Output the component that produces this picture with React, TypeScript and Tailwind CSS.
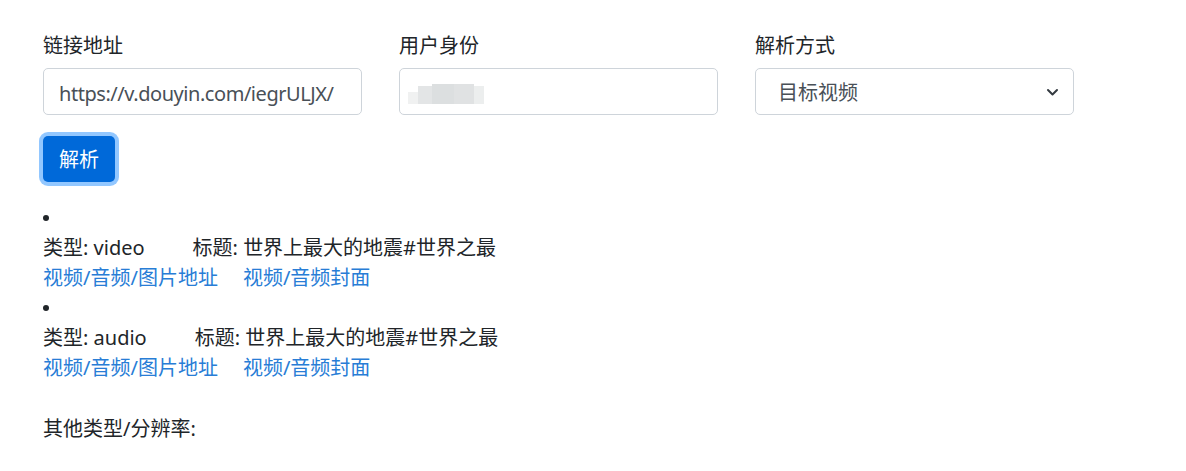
export default function App() {
  const font = {
    fontFamily: '"Segoe UI", "Noto Sans", "Noto Sans CJK SC", sans-serif',
  };

  const items = [
    { type: "video", title: "世界上最大的地震#世界之最" },
    { type: "audio", title: "世界上最大的地震#世界之最" },
  ];

  return (
    <main
      className="min-h-screen bg-white pl-[43px] pt-[31px] text-[20px] leading-[30px] text-[#212529]"
      style={font}
    >
      <div className="flex gap-[37px]">
        <div className="w-[319px]">
          <label className="mb-[7px] block">链接地址</label>
          <input
            type="text"
            defaultValue="https://v.douyin.com/iegrULJX/"
            className="h-[47px] w-full rounded-[5px] border border-[#ced4da] px-[15px] pt-[3px] text-[20px] tracking-[-0.45px] text-[#495057] outline-none"
          />
        </div>
        <div className="w-[319px]">
          <label className="mb-[7px] block">用户身份</label>
          <div className="flex h-[47px] w-full items-center rounded-[5px] border border-[#ced4da] px-[8px] pt-[4px]">
            {/* blurred-out value */}
            <div className="flex items-end">
              <div className="h-[12px] w-[10px] bg-[#f0f1f1]" />
              <div className="h-[18px] w-[14px] bg-[#e3e5e6]" />
              <div className="h-[20px] w-[22px] bg-[#dcdfe0]" />
              <div className="h-[20px] w-[20px] bg-[#e0e2e3]" />
              <div className="h-[18px] w-[10px] bg-[#eceeee]" />
            </div>
          </div>
        </div>
        <div className="w-[319px]">
          <label className="mb-[7px] block">解析方式</label>
          <div className="flex h-[47px] w-full items-center justify-between rounded-[5px] border border-[#ced4da] pl-[22px] pr-[14px] text-[#495057]">
            <span className="pt-[3px]">目标视频</span>
            <svg width="13" height="10" viewBox="0 0 13 10" fill="none">
              <path
                d="M2 3l4.5 4.5L11 3"
                stroke="#343a40"
                strokeWidth="2"
                strokeLinecap="round"
                strokeLinejoin="round"
              />
            </svg>
          </div>
        </div>
      </div>

      <button className="mt-[21px] h-[46px] w-[72px] rounded-[5px] bg-[#0069d9] pt-[2px] text-white shadow-[0_0_0_4px_rgba(38,143,255,0.5)]">
        解析
      </button>

      <ul className="mt-[21px]">
        {items.map((it) => (
          <li key={it.type}>
            <div className="flex h-[30px] items-center">
              <span className="h-[6px] w-[6px] rounded-full bg-[#212529]" />
            </div>
            <div className="flex">
              <span>类型: {it.type}</span>
              <span className="ml-[48px]">标题: {it.title}</span>
            </div>
            <div className="flex gap-[25px] text-[#287dd6]">
              <a href="#">视频/音频/图片地址</a>
              <a href="#">视频/音频封面</a>
            </div>
          </li>
        ))}
      </ul>

      <div className="mt-[31px]">其他类型/分辨率:</div>
    </main>
  );
}
